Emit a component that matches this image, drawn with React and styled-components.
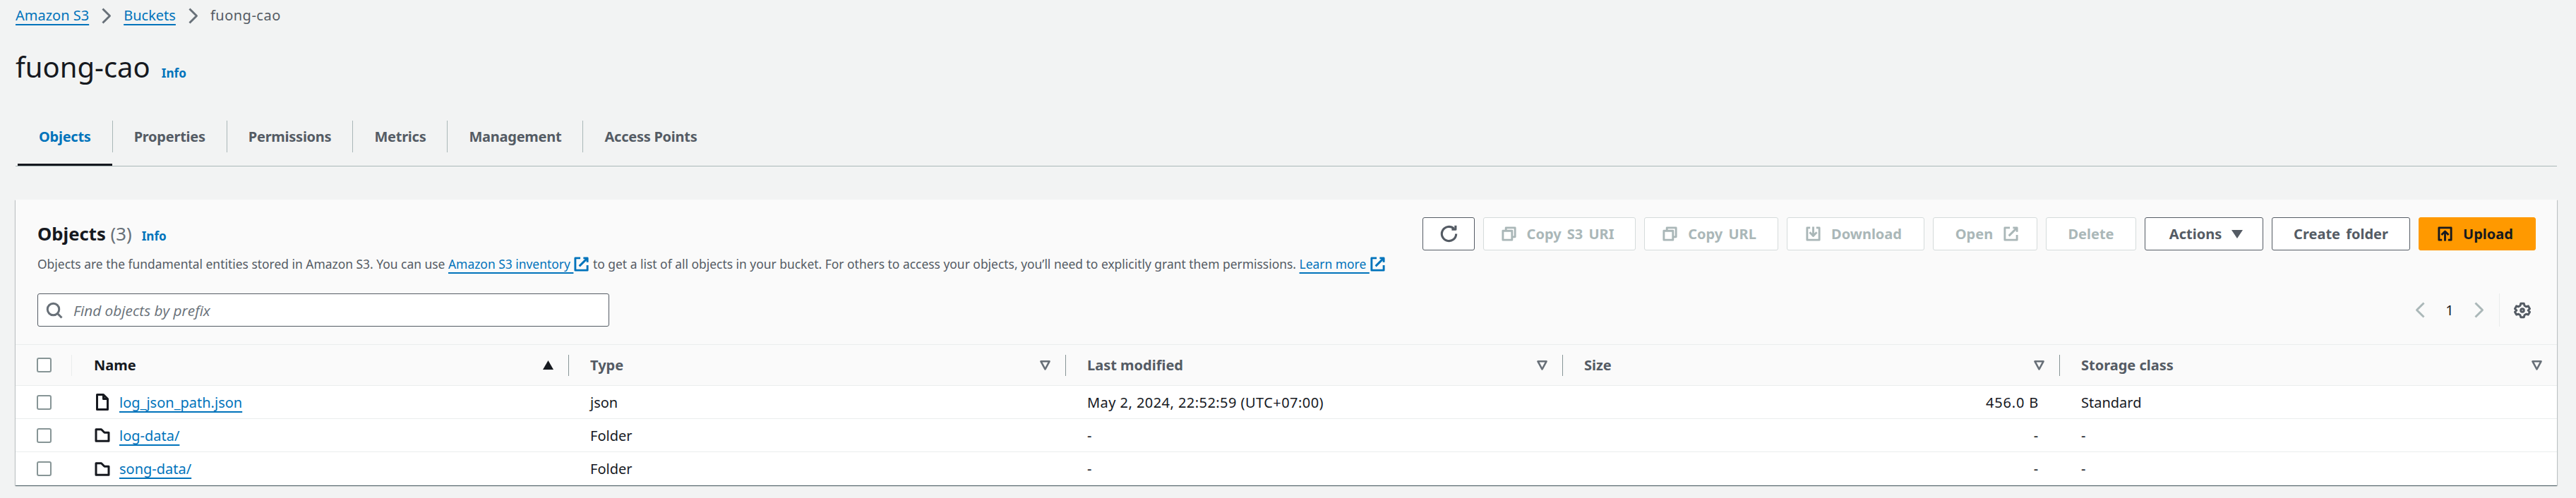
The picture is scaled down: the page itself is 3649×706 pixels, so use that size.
import React from 'react'
import styled, { createGlobalStyle } from 'styled-components'

const GlobalStyle = createGlobalStyle`
    * { box-sizing: border-box; }
    body {
        margin: 0;
        background: #f2f3f3;
        color: #16191f;
        font-family: "Noto Sans", "Open Sans", sans-serif;
        font-size: 20px;
    }
`

const tabs = ['Objects', 'Properties', 'Permissions', 'Metrics', 'Management', 'Access Points']

const columns = [
    { label: 'Name', sort: true },
    { label: 'Type' },
    { label: 'Last modified' },
    { label: 'Size' },
    { label: 'Storage class' },
]

const rows = [
    { name: 'log_json_path.json', kind: 'file', type: 'json', modified: 'May 2, 2024, 22:52:59 (UTC+07:00)', size: '456.0 B', storage: 'Standard' },
    { name: 'log-data/', kind: 'folder', type: 'Folder', modified: '-', size: '-', storage: '-' },
    { name: 'song-data/', kind: 'folder', type: 'Folder', modified: '-', size: '-', storage: '-' },
]

const Icon = ({ size = 23, children }) => (
    <IconSvg width={size} height={size} viewBox="0 0 16 16">{children}</IconSvg>
)

const CopyIcon = () => <Icon><path d="M2 5h9v9H2z" /><path d="M5 5V2h9v9h-3" /></Icon>
const DownloadIcon = () => <Icon><path d="M5 2H2v12h12V2h-3" /><path d="M4.500 6.500 8 10l3.500-3.500" /><path d="M8 1v9" /></Icon>
const ExternalIcon = ({ size }) => <Icon size={size}><path d="M10 2h4v4" /><path d="m6 10 8-8" /><path d="M14 9v5H2V2h5" /></Icon>
const RefreshIcon = () => <Icon size={25}><path d="M14.500 8a6.500 6.500 0 1 1-2-4.700" /><path d="M14 .5V4h-3.500" /></Icon>
const UploadIcon = () => <Icon><path d="M5 14H2V2h12v12h-3" /><path d="M4.500 9 8 5.500 11.500 9" /><path d="M8 6v9" /></Icon>
const FileIcon = () => <Icon size={24}><path d="M3 1h6l4 4v10H3z" /><path d="M9 1.500V5h3.500" /></Icon>
const FolderIcon = () => <Icon size={24}><path d="M2 2.500h5l3 3h4v8H2z" /></Icon>
const Chevron = ({ dir }) => (
    <Icon><path d={dir === 'left' ? 'm11.500 1-7 7 7 7' : 'm4.500 1 7 7-7 7'} /></Icon>
)
const GearIcon = () => (
    <Icon size={24}>
        <path d="M6.500 1.500h3l.5 2 1.600 1 2-.6 1.400 2.600-1.500 1.500 1.500 1.500-1.400 2.600-2-.6-1.600 1-.5 2h-3l-.5-2-1.600-1-2 .6L1 9.500l1.500-1.500L1 6.500l1.400-2.600 2 .6 1.600-1z" />
        <circle cx="8" cy="8" r="1.500" />
    </Icon>
)
const CaretDown = () => <svg width="16" height="12" viewBox="0 0 16 12"><path d="M0 0h16L8 12z" fill="currentColor" /></svg>
const SortArrow = () => <svg width="15" height="13" viewBox="0 0 15 13"><path d="M7.500 0 15 13H0z" fill="#16191f" /></svg>
const FilterArrow = () => (
    <svg width="15" height="14" viewBox="0 0 15 14">
        <path d="M1.500 1.300h12L7.500 12.500z" fill="none" stroke="#687078" strokeWidth="2.600" strokeLinejoin="round" />
    </svg>
)

const App = () => (
    <Page>
        <GlobalStyle />
        <Breadcrumbs>
            <a href="#">Amazon S3</a>
            <Crumb><Chevron dir="right" /></Crumb>
            <a href="#">Buckets</a>
            <Crumb><Chevron dir="right" /></Crumb>
            <CurrentCrumb>fuong-cao</CurrentCrumb>
        </Breadcrumbs>
        <TitleRow>
            <h1>fuong-cao</h1>
            <InfoLink href="#">Info</InfoLink>
        </TitleRow>
        <TabBar>
            {tabs.map((tab, index) => (
                <Tab key={tab} $active={index === 0} $last={index === tabs.length - 1}>{tab}</Tab>
            ))}
        </TabBar>
        <Card>
            <CardHeader>
                <HeaderTop>
                    <CardTitle>
                        <h2>Objects <Count>(3)</Count></h2>
                        <InfoLink href="#">Info</InfoLink>
                    </CardTitle>
                    <Actions>
                        <Button $width={74} $bare><RefreshIcon /></Button>
                        <Button $width={216} $lead disabled><CopyIcon />Copy S3 URI</Button>
                        <Button $width={190} $lead disabled><CopyIcon />Copy URL</Button>
                        <Button $width={195} $lead disabled><DownloadIcon />Download</Button>
                        <Button $width={148} $trail disabled>Open<ExternalIcon /></Button>
                        <Button $width={128} disabled>Delete</Button>
                        <Button $width={168} $trail>Actions<CaretDown /></Button>
                        <Button $width={196}>Create folder</Button>
                        <Button $width={166} $lead $primary><UploadIcon />Upload</Button>
                    </Actions>
                </HeaderTop>
                <Description>
                    Objects are the fundamental entities stored in Amazon S3. You can use{' '}
                    <a href="#">Amazon S3 inventory </a><ExternalLinkIcon><ExternalIcon size={23} /></ExternalLinkIcon>{' '}
                    to get a list of all objects in your bucket. For others to access your objects, you’ll need to explicitly grant them permissions.{' '}
                    <a href="#">Learn more </a><ExternalLinkIcon><ExternalIcon size={23} /></ExternalLinkIcon>
                </Description>
                <FilterRow>
                    <SearchBox>
                        <SearchGlyph>
                            <Icon size={24}><circle cx="7" cy="7" r="5.500" /><path d="m11 11 4 4" /></Icon>
                        </SearchGlyph>
                        <input placeholder="Find objects by prefix" />
                    </SearchBox>
                    <Pager>
                        <PagerArrow><Chevron dir="left" /></PagerArrow>
                        <PageNumber>1</PageNumber>
                        <PagerArrow><Chevron dir="right" /></PagerArrow>
                        <Settings><GearIcon /></Settings>
                    </Pager>
                </FilterRow>
            </CardHeader>
            <HeadRow>
                <CheckCell><Checkbox /></CheckCell>
                {columns.map((col, index) => (
                    <HeadCell key={col.label} $first={index === 0} $last={index === columns.length - 1}>
                        <HeadLabel $strong={col.sort}>{col.label}</HeadLabel>
                        {col.sort ? <SortArrow /> : <FilterArrow />}
                    </HeadCell>
                ))}
            </HeadRow>
            {rows.map((row) => (
                <Row key={row.name}>
                    <CheckCell><Checkbox /></CheckCell>
                    <NameCell>
                        <KindIcon>{row.kind === 'file' ? <FileIcon /> : <FolderIcon />}</KindIcon>
                        <a href="#">{row.name}</a>
                    </NameCell>
                    <Cell>{row.type}</Cell>
                    <Cell $tracking={0.45}>{row.modified}</Cell>
                    <Cell $right $tracking={0.8}>{row.size}</Cell>
                    <Cell>{row.storage}</Cell>
                </Row>
            ))}
        </Card>
    </Page>
)

export default App

const Page = styled.div`
    width: 3649px;
    height: 706px;
    padding: 9px 27px 0 22px;
    overflow: hidden;
    a {
        color: #0073bb;
        text-decoration: underline;
        text-decoration-thickness: 2px;
        text-underline-offset: 5px;
        text-decoration-skip-ink: none;
    }
`
const IconSvg = styled.svg`
    flex: none;
    fill: none;
    stroke: currentColor;
    stroke-width: 2;
    stroke-linejoin: round;
`
const Breadcrumbs = styled.nav`
    display: flex;
    align-items: center;
    height: 26px;
    line-height: 26px;
    color: #545b64;
`
const Crumb = styled.span`
    display: flex;
    width: 49px;
    justify-content: center;
    color: #687078;
`
const CurrentCrumb = styled.span`
    letter-spacing: 0.5px;
`
const TitleRow = styled.div`
    display: flex;
    align-items: baseline;
    gap: 16px;
    height: 50px;
    margin-top: 35px;
    h1 {
        margin: 0;
        font-size: 40px;
        line-height: 50px;
        font-weight: 400;
    }
`
const InfoLink = styled.a`
    font-size: 17.14px;
    font-weight: 700;
    && { text-decoration: none; }
`
const TabBar = styled.div`
    display: flex;
    height: 65px;
    margin-top: 51px;
    padding-left: 3px;
    border-bottom: 1px solid #aab7b8;
`
const Tab = styled.div`
    position: relative;
    height: 45px;
    padding: 0 30px;
    line-height: 45px;
    font-weight: 700;
    letter-spacing: -0.25px;
    color: ${props => props.$active ? '#0073bb' : '#545b64'};
    border-right: ${props => props.$last ? 'none' : '1px solid #aab7b8'};
    &::after {
        content: '';
        display: ${props => props.$active ? 'block' : 'none'};
        position: absolute;
        left: 0;
        right: 0;
        bottom: -19px;
        height: 3px;
        background: #16191f;
    }
`
const Card = styled.section`
    margin-top: 47px;
    background: #fff;
    box-shadow: 0 1px 1px 0 rgba(0, 28, 36, 0.5), 1px 1px 1px 0 rgba(0, 28, 36, 0.15), -1px 1px 1px 0 rgba(0, 28, 36, 0.15);
`
const CardHeader = styled.header`
    padding: 25px 30px 25px 31px;
    background: #fafafa;
`
const HeaderTop = styled.div`
    display: flex;
    align-items: center;
    justify-content: space-between;
    height: 47px;
`
const CardTitle = styled.div`
    display: flex;
    align-items: baseline;
    gap: 14px;
    h2 {
        margin: 0;
        font-size: 25.7px;
        line-height: 36px;
        font-weight: 700;
    }
`
const Count = styled.span`
    font-weight: 400;
    color: #687078;
`
const Actions = styled.div`
    display: flex;
    gap: 12px;
`
const Button = styled.button`
    display: inline-flex;
    align-items: center;
    justify-content: center;
    gap: 14px;
    flex: none;
    width: ${props => props.$width}px;
    height: 47px;
    padding: 0 ${props => props.$trail ? '26px' : props.$bare ? '0' : '32px'} 0 ${props => props.$lead ? '26px' : props.$bare ? '0' : '32px'};
    border-radius: 3px;
    font-family: inherit;
    font-size: 20px;
    font-weight: 700;
    word-spacing: 3px;
    white-space: nowrap;
    background: ${props => props.$primary ? '#ff9900' : '#fff'};
    color: ${props => props.$primary ? '#16191f' : '#545b64'};
    border: 1px solid ${props => props.$primary ? '#ff9900' : '#545b64'};
    &:disabled {
        color: #aab7b8;
        border-color: #d5dbdb;
    }
`
const Description = styled.p`
    margin: 6px 0 0;
    font-size: 17.43px;
    line-height: 26px;
    color: #545b64;
`
const ExternalLinkIcon = styled.span`
    color: #0073bb;
    svg { vertical-align: -5px; }
`
const FilterRow = styled.div`
    display: flex;
    align-items: center;
    justify-content: space-between;
    margin-top: 29px;
`
const SearchBox = styled.label`
    display: flex;
    align-items: center;
    gap: 13px;
    width: 810px;
    height: 47px;
    padding-left: 11px;
    background: #fff;
    border: 1px solid #545b64;
    border-radius: 3px;
    input {
        flex: 1;
        border: none;
        outline: none;
        background: none;
        font: italic 400 20.8px "Open Sans", sans-serif;
        &::placeholder {
            color: #687078;
            opacity: 1;
        }
    }
`
const SearchGlyph = styled.span`
    display: flex;
    color: #687078;
`
const Pager = styled.div`
    display: flex;
    align-items: center;
    height: 47px;
`
const PagerArrow = styled.span`
    display: flex;
    color: #aab7b8;
`
const PageNumber = styled.span`
    width: 60px;
    text-align: center;
`
const Settings = styled.span`
    display: flex;
    align-items: center;
    height: 47px;
    margin-left: 17px;
    padding: 0 7px 0 20px;
    border-left: 1px solid #eaeded;
    color: #545b64;
`
const gridColumns = `
    display: grid;
    grid-template-columns: 80px repeat(5, 1fr);
    align-items: center;
`
const HeadRow = styled.div`
    ${gridColumns}
    height: 59px;
    background: #fafafa;
    border-top: 1px solid #eaeded;
    border-bottom: 1px solid #eaeded;
`
const Row = styled.div`
    ${gridColumns}
    height: 47px;
    border-bottom: 1px solid #eaeded;
    &:last-child { border-bottom: none; }
`
const CheckCell = styled.div`
    display: flex;
    align-items: center;
    height: 30px;
    padding-left: 30px;
    ${HeadRow} & { border-right: 1px solid #eaeded; }
`
const Checkbox = styled.span`
    display: block;
    width: 21px;
    height: 21px;
    background: #fff;
    border: 2px solid #879596;
    border-radius: 3px;
`
const HeadCell = styled.div`
    display: flex;
    align-items: center;
    justify-content: space-between;
    height: 30px;
    padding: 0 21px 0 ${props => props.$first ? '31px' : '30px'};
    border-right: ${props => props.$last ? 'none' : '1px solid #879596'};
`
const HeadLabel = styled.span`
    font-weight: 700;
    color: ${props => props.$strong ? '#16191f' : '#545b64'};
`
const Cell = styled.div`
    padding: 0 30px;
    text-align: ${props => props.$right ? 'right' : 'left'};
    letter-spacing: ${props => props.$tracking || 0}px;
`
const NameCell = styled.div`
    display: flex;
    align-items: center;
    gap: 12px;
    padding-left: 31px;
`
const KindIcon = styled.span`
    display: flex;
    color: #16191f;
`
